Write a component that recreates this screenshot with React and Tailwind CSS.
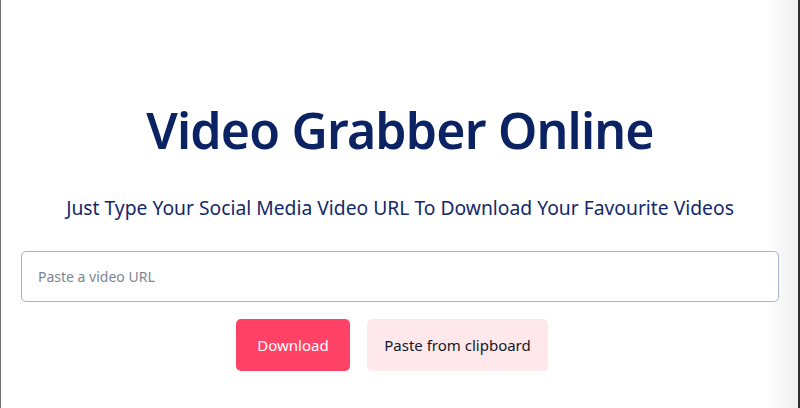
export default function App() {
  return (
    <div
      className="h-[408px] w-[800px] overflow-hidden border-l border-l-[#6e6e6e] border-r-2 border-r-[#2e2e2e] bg-[linear-gradient(90deg,#ffffff_calc(100%_-_32px),#efefef)] flex flex-col pl-5 pr-[19px]"
      style={{ fontFamily: '"Noto Sans", "Open Sans", sans-serif' }}
    >
      <h1 className="mt-[105px] text-center text-[50px] leading-none font-semibold text-[#0b2263] tracking-[-0.8px]">
        Video Grabber Online
      </h1>
      <p className="mt-[43px] text-center text-[19.3px] leading-none text-[#14286a]">
        Just Type Your Social Media Video URL To Download Your Favourite Videos
      </p>
      <input
        type="text"
        placeholder="Paste a video URL"
        className="mt-[34px] h-[51px] w-full rounded-[5px] border border-[#aab1cc] bg-white px-4 text-[14px] text-[#374151] placeholder:text-[#7c8596] outline-none"
      />
      <div className="mt-[17px] flex justify-center gap-[17px] pr-[16px]">
        <button className="h-[52px] w-[114px] rounded-[5px] bg-[#ff4266] text-[15px] text-white">
          Download
        </button>
        <button className="h-[52px] w-[181px] rounded-[5px] bg-[#ffe8ec] text-[15px] text-[#111827]">
          Paste from clipboard
        </button>
      </div>
    </div>
  );
}
